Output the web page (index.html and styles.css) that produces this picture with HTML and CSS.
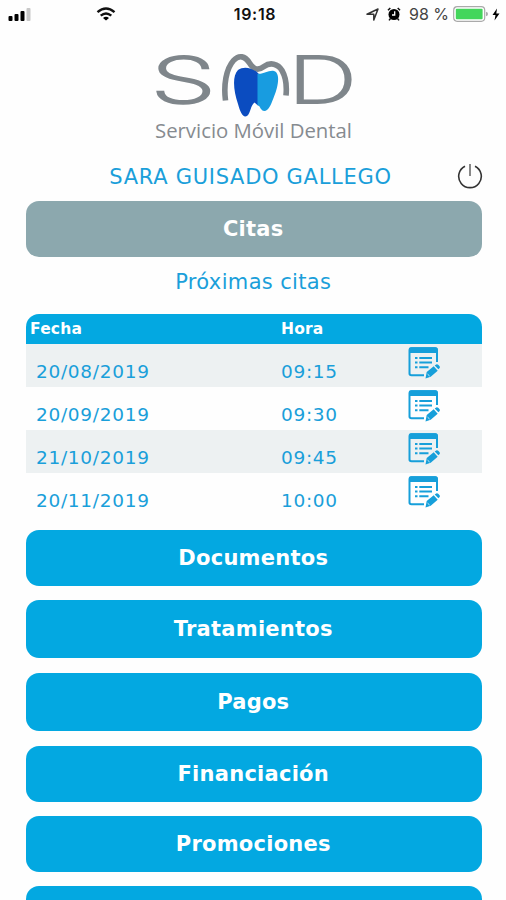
FILE: index.html
```
<!DOCTYPE html>
<html lang="es">
<head>
  <meta charset="UTF-8">
  <meta name="viewport" content="width=device-width, initial-scale=1.0">
  <title>Servicio Móvil Dental</title>
  <link rel="stylesheet" href="styles.css">
</head>
<body>
  <!-- Iconos reutilizados -->
  <svg class="sprite" width="0" height="0">
    <symbol id="icon-edit" viewBox="0 0 32 32">
      <path d="M29 15V3.5Q29 1.300 27 1.300H3.500Q1.500 1.300 1.500 3.500V26.500Q1.500 28.300 3.500 28.300H16" fill="none" stroke="#169fda" stroke-width="2"/>
      <path d="M1 6V2Q1 .3 3 .3H27.500Q29.700 .3 29.700 2V6Z" fill="#169fda"/>
      <path d="M7 11h2.500M7 15.500h2.500M7 20.200h2.500M11.300 11H24M11.300 15.500H24M11.300 20.200H20.500" stroke="#169fda" stroke-width="1.900"/>
      <path d="M17.500 31.500l1.200-6.500 7-5.700 4 4.500-7 6ZM26.700 18.600l1.500-1.200q1.200-.5 2.300.6l1.100 1.300q.7 1.200-.2 2l-1 1Z" fill="#169fda"/>
      <path d="M19.600 27.200l2 1.800" stroke="#fff" stroke-width=".8"/>
    </symbol>
  </svg>

  <div class="status-bar">
    <div class="status-left">
      <svg class="icon-signal" width="23" height="14" viewBox="0 0 23 14">
        <rect x=".5" y="9" width="4" height="5" rx="1"/>
        <rect x="6.500" y="7" width="4" height="7" rx="1"/>
        <rect x="12.500" y="4" width="4" height="10" rx="1"/>
        <rect x="18.500" y="1" width="4" height="13" rx="1" fill="#c8c8c8"/>
      </svg>
      <svg class="icon-wifi" width="20" height="14" viewBox="0 0 20 14">
        <path d="M1.500 5.200Q10-2.200 18.500 5.200M4.700 8.700Q10 4.200 15.300 8.700" fill="none" stroke="#111" stroke-width="2.400"/>
        <path d="M10 13.500L7 10.900Q10 8.400 13 10.900Z"/>
      </svg>
    </div>
    <div class="status-time">19:18</div>
    <div class="status-right">
      <svg width="13" height="13" viewBox="0 0 13 13">
        <path d="M1 6.300L12 1 7.800 12V6.300Z" fill="none" stroke="#333" stroke-width="1.500" stroke-linejoin="round"/>
      </svg>
      <svg class="icon-alarm" width="14" height="14" viewBox="0 0 14 14">
        <circle cx="7" cy="7.500" r="5.500"/>
        <path d="M1 3.300L3.300 1M10.700 1L13 3.300M3.500 11.500L2 13.400M10.500 11.500L12 13.400" stroke="#111" stroke-width="1.500"/>
        <path d="M7.700 4.300V8H5" fill="none" stroke="#fff" stroke-width="1.300"/>
      </svg>
      <span class="battery-text">98 %</span>
      <svg class="icon-battery" width="36" height="16" viewBox="0 0 36 16">
        <rect x=".7" y=".7" width="31" height="14.600" rx="3.500" fill="#fff" stroke="#aaa" stroke-width="1.200"/>
        <rect x="2.800" y="2.800" width="26.800" height="10.400" rx="1" fill="#43d65b"/>
        <path d="M33 5.800Q35 6 35 8T33 10.200Z" fill="#aaa"/>
      </svg>
      <svg width="8" height="13" viewBox="0 0 8 13">
        <path d="M5 .5L.5 7H3.500L2.500 12.500 7.500 5.600H4.300Z"/>
      </svg>
    </div>
  </div>

  <div class="logo">
    <svg width="216" height="114" viewBox="0 -16 216 114">
      <text class="logo-letter" transform="translate(5.500 57.500) scale(1.650 1)">S</text>
      <text class="logo-letter" transform="translate(143 57.500) scale(1.500 1)">D</text>
      <!-- Contorno de la muela -->
      <path d="M80.500 55.500C78.500 40 81 24 88.500 15.500C94 9.500 100 11 104.500 18C108.500 24.500 113 26 119 21.500C125 17 133 18.500 137 25.500Q142.500 35 141 50.500" fill="none" stroke="#7f868b" stroke-width="5.600"/>
      <path d="M113.500 28.500C108 23 99 20.500 93 25C87 31 88.500 46 93 59C95.500 68 98 73 102 71C106 68 105 61 109.500 57.500L113.500 61Z" fill="#0b4cc0"/>
      <path d="M112.500 28.800C119 29.500 123 25 129 26C136 28 133 43 128.500 53C125.500 61 123 66 119.500 66C115.500 66 115.500 61 112.500 60Z" fill="#189ce0"/>
      <text class="logo-text" x="10" y="92.500" textLength="197" lengthAdjust="spacingAndGlyphs">Servicio Móvil Dental</text>
    </svg>
  </div>

  <div class="user">
    <div class="user-name">SARA GUISADO GALLEGO</div>
    <svg class="icon-power" width="26" height="27" viewBox="0 0 26 27">
      <path d="M8 3.200A11.300 11.300 0 1 0 18 3.200" fill="none" stroke="#333" stroke-width="1.600"/>
      <path d="M13 1V13" stroke="#888" stroke-width="2"/>
    </svg>
  </div>

  <div class="content">
    <div class="menu-btn active">Citas</div>
    <div class="subtitle">Próximas citas</div>

    <div class="table">
      <div class="table-head">
        <span>Fecha</span><span>Hora</span>
      </div>
      <div class="table-row">
        <span class="fecha">20/08/2019</span><span>09:15</span>
        <svg class="icon-edit"><use href="#icon-edit"/></svg>
      </div>
      <div class="table-row">
        <span class="fecha">20/09/2019</span><span>09:30</span>
        <svg class="icon-edit"><use href="#icon-edit"/></svg>
      </div>
      <div class="table-row">
        <span class="fecha">21/10/2019</span><span>09:45</span>
        <svg class="icon-edit"><use href="#icon-edit"/></svg>
      </div>
      <div class="table-row">
        <span class="fecha">20/11/2019</span><span>10:00</span>
        <svg class="icon-edit"><use href="#icon-edit"/></svg>
      </div>
    </div>

    <div class="menu">
      <div class="menu-btn">Documentos</div>
      <div class="menu-btn tall">Tratamientos</div>
      <div class="menu-btn tall">Pagos</div>
      <div class="menu-btn">Financiación</div>
      <div class="menu-btn">Promociones</div>
      <div class="menu-btn"></div>
    </div>
  </div>
</body>
</html>
```
FILE: styles.css
```
* {
  box-sizing: border-box;
}

body {
  margin: 0;
  height: 900px;
  overflow: hidden;
  background-color: #fefefe;
  color: #1a9fda;
  font-family: "DejaVu Sans", Verdana, sans-serif;
}

svg {
  display: block;
  flex-shrink: 0;
}

.sprite {
  display: none;
}

/* Barra de estado */
.status-bar {
  display: grid;
  grid-template-columns: 1fr auto 1fr;
  align-items: center;
  height: 28px;
  padding: 0 6px 0 8px;
  color: #111;
  font-family: Inter, "Liberation Sans", sans-serif;
}

.status-left,
.status-right {
  display: flex;
  align-items: center;
}

.status-left {
  gap: 65px;
}

.status-right {
  justify-content: flex-end;
}

.icon-alarm {
  margin-left: 8px;
}

.status-time {
  padding-left: 2px;
  font-size: 16px;
  font-weight: 600;
  letter-spacing: 0.7px;
}

.battery-text {
  margin-left: 8px;
  font-size: 16px;
  color: #444;
  white-space: nowrap;
}

.icon-battery {
  margin: 0 3px 0 4px;
}

/* Logo */
.logo {
  display: flex;
  justify-content: center;
  height: 114px;
  margin-top: 1px;
}

.logo-letter {
  font-family: Inter, sans-serif;
  font-size: 64px;
  font-weight: 200;
  fill: #7f868b;
  stroke: #7f868b;
  stroke-width: 1.8px;
}

.logo-text {
  font-family: "Open Sans", sans-serif;
  font-size: 20px;
  fill: #868b90;
}

/* Usuario */
.user {
  display: grid;
  grid-template-columns: 1fr auto 1fr;
  align-items: center;
  height: 58px;
  padding: 9px 23px 0 18px;
}

.user-name {
  grid-column: 2;
  font-size: 21px;
  letter-spacing: 0.7px;
}

.icon-power {
  justify-self: end;
}

.content {
  padding: 0 24.5px 0 26px;
}

.menu-btn {
  display: flex;
  align-items: center;
  justify-content: center;
  height: 56px;
  padding-right: 1px;
  border-radius: 13px;
  background-color: #03a8e1;
  color: #fff;
  font-size: 21px;
  font-weight: bold;
  letter-spacing: 0.25px;
}

.menu-btn.tall {
  height: 58.5px;
}

.menu-btn.active {
  background-color: #8ca8ae;
}

.subtitle {
  height: 57px;
  padding-right: 1px;
  line-height: 50px;
  font-size: 21px;
  letter-spacing: 0.35px;
  text-align: center;
}

/* Tabla de citas */
.table-head,
.table-row {
  display: grid;
  grid-template-columns: 255px 127px 1fr;
}

.table-head {
  align-items: center;
  height: 29.5px;
  padding: 1px 0 0 4px;
  border-radius: 13px 13px 0 0;
  background-color: #03a8e1;
  color: #fff;
  font-size: 15.5px;
  font-weight: bold;
  letter-spacing: 0.2px;
}

.table-head span:last-child {
  margin-left: -4px;
}

.table-row {
  height: 43px;
  font-size: 18.5px;
  line-height: 56px;
  letter-spacing: 0.7px;
}

.table-row:nth-child(even) {
  background-color: #edf1f2;
}

.fecha {
  padding-left: 10px;
}

.icon-edit {
  width: 32px;
  height: 32px;
  margin-top: 3px;
}

.menu {
  display: flex;
  flex-direction: column;
  gap: 14.400px;
  padding-top: 14px;
}
```
